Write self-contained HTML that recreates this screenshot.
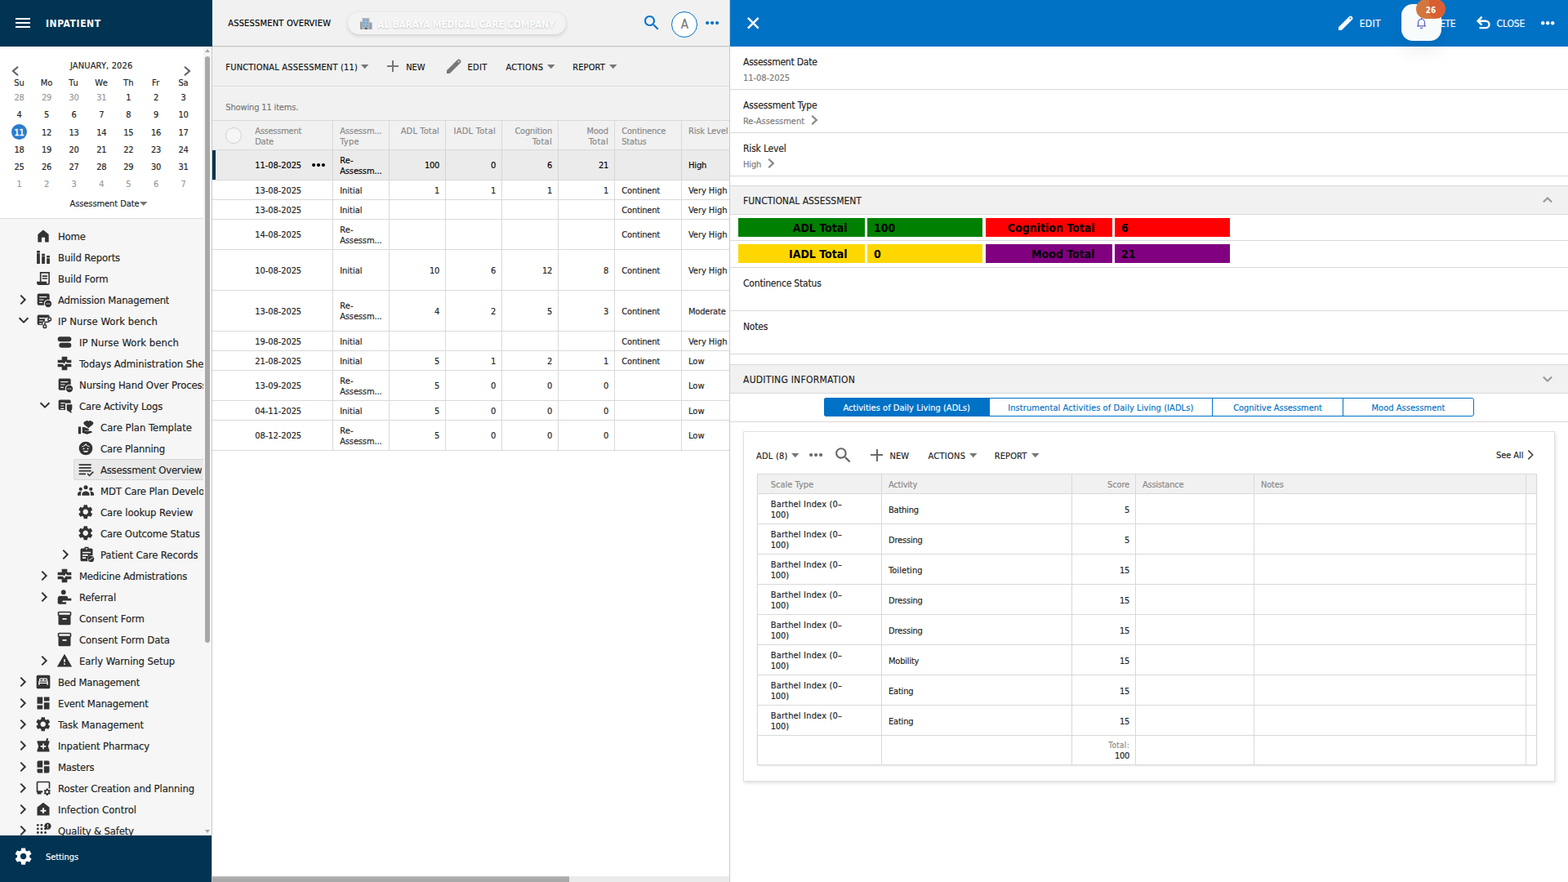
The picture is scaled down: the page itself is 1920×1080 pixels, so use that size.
<!DOCTYPE html>
<html lang="en"><head><meta charset="utf-8"><title>Assessment Overview</title><style>
*{box-sizing:border-box;margin:0;padding:0}
html,body{width:1920px;height:1080px;overflow:hidden;background:#fff}
body{position:relative;font-family:"DejaVu Sans Condensed","DejaVu Sans","Liberation Sans",sans-serif;font-stretch:condensed;font-size:11px;color:#222}
.a{position:absolute;white-space:nowrap;-webkit-text-stroke:0.15px}
svg{display:block;overflow:visible}
</style></head>
<body>
<div class="a" style="left:0px;top:0px;width:260px;height:57px;background:#003452;"></div>
<div class="a" style="left:0px;top:57px;width:249px;height:210px;background:#fff;"></div>
<div class="a" style="left:0px;top:267px;width:249px;height:1px;background:#dcdcdc;"></div>
<div class="a" style="left:0px;top:268px;width:249px;height:755px;background:#f6f6f6;"></div>
<div class="a" style="left:249px;top:57px;width:10px;height:966px;background:#f6f6f6;"></div>
<div class="a" style="left:251px;top:69px;width:6px;height:718px;background:#a8a8a8;border-radius:3px"></div>
<svg class="a" style="left:249px;top:57px" width="10" height="10" viewBox="0 0 10 10"><path d="M2 7L5 3L8 7z" fill="#a6a6a6"/></svg>
<svg class="a" style="left:249px;top:1013px" width="10" height="10" viewBox="0 0 10 10"><path d="M2 3L5 7L8 3z" fill="#a6a6a6"/></svg>
<div class="a" style="left:259px;top:57px;width:1px;height:1023px;background:#c8c8c8;"></div>
<div class="a" style="left:19px;top:22px;width:18px;height:2px;background:#fff;"></div>
<div class="a" style="left:19px;top:27px;width:18px;height:2px;background:#fff;"></div>
<div class="a" style="left:19px;top:32px;width:18px;height:2px;background:#fff;"></div>
<div class="a" style="left:56px;top:22px;line-height:14px;font-size:12px;color:#fff;letter-spacing:0.58px;font-weight:700;-webkit-text-stroke:0">INPATIENT</div>
<div class="a" style="left:24.2px;width:200px;text-align:center;top:74px;line-height:13px;color:#222;letter-spacing:0.15px">JANUARY, 2026</div>
<svg class="a" style="left:9.3px;top:77px" width="20" height="20" viewBox="-10 -10 20 20"><path d="M3 -5.3L-3 0L3 5.3" fill="none" stroke="#5f6670" stroke-width="2.2"/></svg>
<svg class="a" style="left:218.8px;top:77px" width="20" height="20" viewBox="-10 -10 20 20"><path d="M-3 -5.3L3 0L-3 5.3" fill="none" stroke="#5f6670" stroke-width="2.2"/></svg>
<div class="a" style="left:6.4px;width:34px;text-align:center;top:95px;line-height:13px;color:#222;letter-spacing:-0.15px">Su</div>
<div class="a" style="left:39.9px;width:34px;text-align:center;top:95px;line-height:13px;color:#222;letter-spacing:-0.07px">Mo</div>
<div class="a" style="left:73.5px;width:34px;text-align:center;top:95px;line-height:13px;color:#222;letter-spacing:0.96px">Tu</div>
<div class="a" style="left:107.2px;width:34px;text-align:center;top:95px;line-height:13px;color:#222;letter-spacing:0.24px">We</div>
<div class="a" style="left:140.3px;width:34px;text-align:center;top:95px;line-height:13px;color:#222;letter-spacing:0.12px">Th</div>
<div class="a" style="left:173.9px;width:34px;text-align:center;top:95px;line-height:13px;color:#222;letter-spacing:0.37px">Fr</div>
<div class="a" style="left:207.5px;width:34px;text-align:center;top:95px;line-height:13px;color:#222;letter-spacing:-0.22px">Sa</div>
<div class="a" style="left:6.4px;width:34px;text-align:center;top:113px;line-height:13px;color:#999;letter-spacing:-0.29px">28</div>
<div class="a" style="left:39.9px;width:34px;text-align:center;top:113px;line-height:13px;color:#999;letter-spacing:-0.29px">29</div>
<div class="a" style="left:73.5px;width:34px;text-align:center;top:113px;line-height:13px;color:#999;letter-spacing:-0.29px">30</div>
<div class="a" style="left:107.2px;width:34px;text-align:center;top:113px;line-height:13px;color:#999;letter-spacing:-0.29px">31</div>
<div class="a" style="left:140.3px;width:34px;text-align:center;top:113px;line-height:13px;color:#222;letter-spacing:-0.29px">1</div>
<div class="a" style="left:173.9px;width:34px;text-align:center;top:113px;line-height:13px;color:#222;letter-spacing:-0.29px">2</div>
<div class="a" style="left:207.5px;width:34px;text-align:center;top:113px;line-height:13px;color:#222;letter-spacing:-0.29px">3</div>
<div class="a" style="left:6.4px;width:34px;text-align:center;top:134px;line-height:13px;color:#222;letter-spacing:-0.29px">4</div>
<div class="a" style="left:39.9px;width:34px;text-align:center;top:134px;line-height:13px;color:#222;letter-spacing:-0.29px">5</div>
<div class="a" style="left:73.5px;width:34px;text-align:center;top:134px;line-height:13px;color:#222;letter-spacing:-0.29px">6</div>
<div class="a" style="left:107.2px;width:34px;text-align:center;top:134px;line-height:13px;color:#222;letter-spacing:-0.29px">7</div>
<div class="a" style="left:140.3px;width:34px;text-align:center;top:134px;line-height:13px;color:#222;letter-spacing:-0.29px">8</div>
<div class="a" style="left:173.9px;width:34px;text-align:center;top:134px;line-height:13px;color:#222;letter-spacing:-0.29px">9</div>
<div class="a" style="left:207.5px;width:34px;text-align:center;top:134px;line-height:13px;color:#222;letter-spacing:-0.29px">10</div>
<div class="a" style="left:14px;top:152px;width:19px;height:19px;background:#2b7ccd;border-radius:50%"></div>
<div class="a" style="left:6.4px;width:34px;text-align:center;top:156px;line-height:13px;color:#fff;letter-spacing:-0.29px;-webkit-text-stroke:0.5px">11</div>
<div class="a" style="left:39.9px;width:34px;text-align:center;top:156px;line-height:13px;color:#222;letter-spacing:-0.29px">12</div>
<div class="a" style="left:73.5px;width:34px;text-align:center;top:156px;line-height:13px;color:#222;letter-spacing:-0.29px">13</div>
<div class="a" style="left:107.2px;width:34px;text-align:center;top:156px;line-height:13px;color:#222;letter-spacing:-0.29px">14</div>
<div class="a" style="left:140.3px;width:34px;text-align:center;top:156px;line-height:13px;color:#222;letter-spacing:-0.29px">15</div>
<div class="a" style="left:173.9px;width:34px;text-align:center;top:156px;line-height:13px;color:#222;letter-spacing:-0.29px">16</div>
<div class="a" style="left:207.5px;width:34px;text-align:center;top:156px;line-height:13px;color:#222;letter-spacing:-0.29px">17</div>
<div class="a" style="left:6.4px;width:34px;text-align:center;top:177px;line-height:13px;color:#222;letter-spacing:-0.29px">18</div>
<div class="a" style="left:39.9px;width:34px;text-align:center;top:177px;line-height:13px;color:#222;letter-spacing:-0.29px">19</div>
<div class="a" style="left:73.5px;width:34px;text-align:center;top:177px;line-height:13px;color:#222;letter-spacing:-0.29px">20</div>
<div class="a" style="left:107.2px;width:34px;text-align:center;top:177px;line-height:13px;color:#222;letter-spacing:-0.29px">21</div>
<div class="a" style="left:140.3px;width:34px;text-align:center;top:177px;line-height:13px;color:#222;letter-spacing:-0.29px">22</div>
<div class="a" style="left:173.9px;width:34px;text-align:center;top:177px;line-height:13px;color:#222;letter-spacing:-0.29px">23</div>
<div class="a" style="left:207.5px;width:34px;text-align:center;top:177px;line-height:13px;color:#222;letter-spacing:-0.29px">24</div>
<div class="a" style="left:6.4px;width:34px;text-align:center;top:198px;line-height:13px;color:#222;letter-spacing:-0.29px">25</div>
<div class="a" style="left:39.9px;width:34px;text-align:center;top:198px;line-height:13px;color:#222;letter-spacing:-0.29px">26</div>
<div class="a" style="left:73.5px;width:34px;text-align:center;top:198px;line-height:13px;color:#222;letter-spacing:-0.29px">27</div>
<div class="a" style="left:107.2px;width:34px;text-align:center;top:198px;line-height:13px;color:#222;letter-spacing:-0.29px">28</div>
<div class="a" style="left:140.3px;width:34px;text-align:center;top:198px;line-height:13px;color:#222;letter-spacing:-0.29px">29</div>
<div class="a" style="left:173.9px;width:34px;text-align:center;top:198px;line-height:13px;color:#222;letter-spacing:-0.29px">30</div>
<div class="a" style="left:207.5px;width:34px;text-align:center;top:198px;line-height:13px;color:#222;letter-spacing:-0.29px">31</div>
<div class="a" style="left:6.4px;width:34px;text-align:center;top:219px;line-height:13px;color:#999;letter-spacing:-0.29px">1</div>
<div class="a" style="left:39.9px;width:34px;text-align:center;top:219px;line-height:13px;color:#999;letter-spacing:-0.29px">2</div>
<div class="a" style="left:73.5px;width:34px;text-align:center;top:219px;line-height:13px;color:#999;letter-spacing:-0.29px">3</div>
<div class="a" style="left:107.2px;width:34px;text-align:center;top:219px;line-height:13px;color:#999;letter-spacing:-0.29px">4</div>
<div class="a" style="left:140.3px;width:34px;text-align:center;top:219px;line-height:13px;color:#999;letter-spacing:-0.29px">5</div>
<div class="a" style="left:173.9px;width:34px;text-align:center;top:219px;line-height:13px;color:#999;letter-spacing:-0.29px">6</div>
<div class="a" style="left:207.5px;width:34px;text-align:center;top:219px;line-height:13px;color:#999;letter-spacing:-0.29px">7</div>
<div class="a" style="left:85.5px;top:243px;line-height:13px;color:#222;letter-spacing:-0.08px">Assessment Date</div>
<svg class="a" style="left:171.300px;top:247px" width="9.500" height="5" viewBox="0 0 9.500 5"><path d="M0 0h9.500L4.750 5z" fill="#777"/></svg>
<svg class="a" style="left:43px;top:279px;" width="20" height="20" viewBox="0 0 24 24"><path d="M4 21V9.5L12 3l8 6.5V21h-5.5v-7h-5v7z" fill="#333" /></svg>
<div class="a" style="left:71px;top:281px;line-height:18px;font-size:13px;color:#222;letter-spacing:-0.24px;max-width:178px;overflow:hidden">Home</div>
<svg class="a" style="left:43px;top:305px;" width="20" height="20" viewBox="0 0 24 24"><path fill="#333" d="M2.500 2.500h4.500v3.200H2.500zM2.500 6.400h4.500V21.500H2.500zM9.800 7h4.500v3.200H9.800zM9.800 10.900h4.500V21.500H9.800zM17 9.500h4.500v3.200H17zM17 13.400h4.500V21.500H17z"/></svg>
<div class="a" style="left:71px;top:307px;line-height:18px;font-size:13px;color:#222;letter-spacing:-0.14px;max-width:178px;overflow:hidden">Build Reports</div>
<svg class="a" style="left:43px;top:331px;" width="20" height="20" viewBox="0 0 24 24"><path fill="#333" fill-rule="evenodd" d="M7 2.500h14.500v16a3 3 0 0 1-3 3H5.500a3 3 0 0 1-3-3V16.500h4.500zM9 4.500v12h8V18.500a1.250 1.250 0 0 0 2.500 0V4.500zM10.500 7.500h7.500v2h-7.500zM10.500 11h7.500v2h-7.500z"/></svg>
<div class="a" style="left:71px;top:333px;line-height:18px;font-size:13px;color:#222;letter-spacing:-0.09px;max-width:178px;overflow:hidden">Build Form</div>
<svg class="a" style="left:18.2px;top:357px" width="20" height="20" viewBox="-10 -10 20 20"><path d="M-2.7 -5.4L2.7 0L-2.7 5.4" fill="none" stroke="#333" stroke-width="2"/></svg>
<svg class="a" style="left:43.8px;top:357px;" width="20" height="20" viewBox="0 0 24 24"><path fill="#333" fill-rule="evenodd" d="M4 3h14a2 2 0 0 1 2 2v7.200a6 6 0 0 0-7.800 7.800H4a2 2 0 0 1-2-2V5a2 2 0 0 1 2-2zM5 7.300v1.400h11V7.300zM5 11.300v1.400h6.500v-1.400zM5 15.300v1.400h4.500v-1.400z"/><circle cx="18" cy="18" r="5" fill="#333"/><circle cx="15.800" cy="18" r=".9" fill="#ccc"/><circle cx="18" cy="18" r=".9" fill="#ccc"/><circle cx="20.200" cy="18" r=".9" fill="#ccc"/></svg>
<div class="a" style="left:71px;top:359px;line-height:18px;font-size:13px;color:#222;letter-spacing:-0.22px;max-width:178px;overflow:hidden">Admission Management</div>
<svg class="a" style="left:19.1px;top:381.9px" width="20" height="20" viewBox="-10 -10 20 20"><path d="M-5.4 -2.7L0 2.7L5.4 -2.7" fill="none" stroke="#333" stroke-width="2"/></svg>
<svg class="a" style="left:43.8px;top:383px;" width="20" height="20" viewBox="0 0 24 24"><path fill="#333" fill-rule="evenodd" d="M4 3h14a2 2 0 0 1 2 2v2h-3a4 4 0 0 0-4 4v2a3 3 0 0 0-3 3v2H4a2 2 0 0 1-2-2V5a2 2 0 0 1 2-2zM5 7.300v1.400h8.500V7.300zM5 11.300v1.400h5.500v-1.400zM5 15.300v1.400h3.500v-1.400z"/><circle cx="20" cy="9.500" r="2.200" fill="none" stroke="#333" stroke-width="1.800"/><circle cx="13" cy="20" r="2.200" fill="none" stroke="#333" stroke-width="1.800"/><path d="M13 18v-2.500a2 2 0 0 1 2-2h3a2 2 0 0 0 2-2" fill="none" stroke="#333" stroke-width="1.800"/></svg>
<div class="a" style="left:71px;top:385px;line-height:18px;font-size:13px;color:#222;letter-spacing:0.03px;max-width:178px;overflow:hidden">IP Nurse Work bench</div>
<svg class="a" style="left:69px;top:409px;" width="20" height="20" viewBox="0 0 24 24"><rect x="2" y="4" width="20" height="7" rx="3.500" fill="#333"/><rect x="4" y="13" width="18" height="7" rx="3.500" fill="#333"/></svg>
<div class="a" style="left:97px;top:411px;line-height:18px;font-size:13px;color:#222;letter-spacing:0.03px;max-width:152px;overflow:hidden">IP Nurse Work bench</div>
<svg class="a" style="left:69px;top:435px;" width="20" height="20" viewBox="0 0 24 24"><path fill="#333" fill-rule="evenodd" d="M8 2h8v5h6v4.200h-6.500l-1.500-2.500-2.500 4-1.300-1.500H2V7h6zM2 13h7.400l2.400 2.800 2.400-3.800 0.700 1h7.100v4h-6v5H8v-5H2z"/></svg>
<div class="a" style="left:97px;top:437px;line-height:18px;font-size:13px;color:#222;letter-spacing:-0.09px;max-width:152px;overflow:hidden">Todays Administration Sheet</div>
<svg class="a" style="left:69.8px;top:461px;" width="20" height="20" viewBox="0 0 24 24"><path fill="#333" fill-rule="evenodd" d="M4 3h14a2 2 0 0 1 2 2v7.200a6 6 0 0 0-7.800 7.800H4a2 2 0 0 1-2-2V5a2 2 0 0 1 2-2zM5 7.300v1.400h11V7.300zM5 11.300v1.400h6.500v-1.400zM5 15.300v1.400h4.500v-1.400z"/><circle cx="18" cy="18" r="5" fill="#333"/><circle cx="15.800" cy="18" r=".9" fill="#ccc"/><circle cx="18" cy="18" r=".9" fill="#ccc"/><circle cx="20.200" cy="18" r=".9" fill="#ccc"/></svg>
<div class="a" style="left:97px;top:463px;line-height:18px;font-size:13px;color:#222;letter-spacing:-0.12px;max-width:152px;overflow:hidden">Nursing Hand Over Process</div>
<svg class="a" style="left:45.2px;top:485.9px" width="20" height="20" viewBox="-10 -10 20 20"><path d="M-5.4 -2.7L0 2.7L5.4 -2.7" fill="none" stroke="#333" stroke-width="2"/></svg>
<svg class="a" style="left:69.8px;top:487px;" width="20" height="20" viewBox="0 0 24 24"><path fill="#333" fill-rule="evenodd" d="M4 3h14a2 2 0 0 1 2 2v3h-8v10H4a2 2 0 0 1-2-2V5a2 2 0 0 1 2-2zM5 7.300v1.400h6.500V7.300zM5 11.300v1.400h5v-1.400zM5 15.300v1.400h5v-1.400z"/><path fill="#333" d="M14 10h8v6a4 4 0 0 1-2 3.400l2 2.600h-3l-1.200-1.700A4 4 0 0 1 14 16z"/></svg>
<div class="a" style="left:97px;top:489px;line-height:18px;font-size:13px;color:#222;letter-spacing:-0.16px;max-width:152px;overflow:hidden">Care Activity Logs</div>
<svg class="a" style="left:95px;top:513px;" width="20" height="20" viewBox="0 0 24 24"><path fill="#333" d="M1 11.500h4V22H1zM16 3.500a2.700 2.700 0 0 1 4.500 0a2.700 2.700 0 0 1 2 4.500L16 13.500 9.500 8a2.700 2.700 0 0 1 2-4.500a2.700 2.700 0 0 1 4.500 0zM7 12h3l6 2.300a1.500 1.500 0 0 1-.5 2.700h-3l-2-.700 0 .700 2 .700h7a2 2 0 0 1 2 2L14 22.500 7 20.500z"/></svg>
<div class="a" style="left:123px;top:515px;line-height:18px;font-size:13px;color:#222;letter-spacing:-0.03px;max-width:126px;overflow:hidden">Care Plan Template</div>
<svg class="a" style="left:95px;top:539px;" width="20" height="20" viewBox="0 0 24 24"><circle cx="12" cy="12" r="10" fill="#333"/><path d="M6.500 9.500c2.500-.3 4.500-1.500 5.500-3.500c1 2 3 3.200 5.500 3.500" fill="none" stroke="#eee" stroke-width="1.300"/><circle cx="9" cy="12.500" r="1.200" fill="#eee"/><circle cx="15" cy="12.500" r="1.200" fill="#eee"/><path d="M8 15.500a4.500 4.500 0 0 0 8 0z" fill="#eee"/></svg>
<div class="a" style="left:123px;top:541px;line-height:18px;font-size:13px;color:#222;letter-spacing:-0.16px;max-width:126px;overflow:hidden">Care Planning</div>
<div class="a" style="left:90px;top:562px;width:159px;height:26px;background:#e9e9e9;border:1px solid #d6d6d6;border-right:0;border-radius:3px 0 0 3px"></div>
<svg class="a" style="left:95px;top:565px;" width="20" height="20" viewBox="0 0 24 24"><path fill="#333" d="M2 4h18v2H2zM2 8.500h18v2H2zM2 13h18v2H2zM2 17.500h10v2H2zM22.500 14.500l1.400 1.400-6.400 6.400-3.700-3.700 1.400-1.400 2.300 2.300z"/></svg>
<div class="a" style="left:123px;top:567px;line-height:18px;font-size:13px;color:#222;letter-spacing:-0.24px;max-width:126px;overflow:hidden">Assessment Overview</div>
<svg class="a" style="left:95px;top:591px;" width="20" height="20" viewBox="0 0 24 24"><circle cx="12" cy="7" r="3" fill="#333"/><circle cx="4.500" cy="9.500" r="2.500" fill="#333"/><circle cx="19.500" cy="9.500" r="2.500" fill="#333"/><path fill="#333" d="M6.500 19v-2.500c0-2.500 3-4 5.500-4s5.500 1.500 5.500 4V19zM0 19v-2.500c0-2 2-3.300 4.500-3.500c.5 0 1 .1 1.300.3C5 14.200 4.800 15.500 4.800 16.500V19zM24 19v-2.500c0-2-2-3.300-4.500-3.500c-.5 0-1 .1-1.300.3c.8.900 1 2.200 1 3.200V19z"/></svg>
<div class="a" style="left:123px;top:593px;line-height:18px;font-size:13px;color:#222;letter-spacing:-0.14px;max-width:126px;overflow:hidden">MDT Care Plan Development</div>
<svg class="a" style="left:94.25px;top:616.25px;" width="21.5" height="21.5" viewBox="0 0 24 24"><path d="M19.14 12.94c.04-.3.06-.61.06-.94 0-.32-.02-.64-.07-.94l2.03-1.58c.18-.14.23-.41.12-.61l-1.92-3.32c-.12-.22-.37-.29-.59-.22l-2.39.96c-.5-.38-1.03-.7-1.62-.94l-.36-2.54c-.04-.24-.24-.41-.48-.41h-3.84c-.24 0-.43.17-.47.41l-.36 2.54c-.59.24-1.13.57-1.62.94l-2.39-.96c-.22-.08-.47 0-.59.22L2.74 8.87c-.12.21-.08.47.12.61l2.03 1.58c-.05.3-.09.63-.09.94s.02.64.07.94l-2.03 1.58c-.18.14-.23.41-.12.61l1.92 3.32c.12.22.37.29.59.22l2.39-.96c.5.38 1.03.7 1.62.94l.36 2.54c.05.24.24.41.48.41h3.84c.24 0 .44-.17.47-.41l.36-2.54c.59-.24 1.13-.56 1.62-.94l2.39.96c.22.08.47 0 .59-.22l1.92-3.32c.12-.22.07-.47-.12-.61l-2.01-1.58zM12 15.6c-1.98 0-3.6-1.62-3.6-3.6s1.62-3.6 3.6-3.6 3.6 1.62 3.6 3.6-1.62 3.6-3.6 3.6z" fill="#333" /></svg>
<div class="a" style="left:123px;top:619px;line-height:18px;font-size:13px;color:#222;letter-spacing:-0.1px;max-width:126px;overflow:hidden">Care lookup Review</div>
<svg class="a" style="left:94.25px;top:642.25px;" width="21.5" height="21.5" viewBox="0 0 24 24"><path d="M19.14 12.94c.04-.3.06-.61.06-.94 0-.32-.02-.64-.07-.94l2.03-1.58c.18-.14.23-.41.12-.61l-1.92-3.32c-.12-.22-.37-.29-.59-.22l-2.39.96c-.5-.38-1.03-.7-1.62-.94l-.36-2.54c-.04-.24-.24-.41-.48-.41h-3.84c-.24 0-.43.17-.47.41l-.36 2.54c-.59.24-1.13.57-1.62.94l-2.39-.96c-.22-.08-.47 0-.59.22L2.74 8.87c-.12.21-.08.47.12.61l2.03 1.58c-.05.3-.09.63-.09.94s.02.64.07.94l-2.03 1.58c-.18.14-.23.41-.12.61l1.92 3.32c.12.22.37.29.59.22l2.39-.96c.5.38 1.03.7 1.62.94l.36 2.54c.05.24.24.41.48.41h3.84c.24 0 .44-.17.47-.41l.36-2.54c.59-.24 1.13-.56 1.62-.94l2.39.96c.22.08.47 0 .59-.22l1.92-3.32c.12-.22.07-.47-.12-.61l-2.01-1.58zM12 15.6c-1.98 0-3.6-1.62-3.6-3.6s1.62-3.6 3.6-3.6 3.6 1.62 3.6 3.6-1.62 3.6-3.6 3.6z" fill="#333" /></svg>
<div class="a" style="left:123px;top:645px;line-height:18px;font-size:13px;color:#222;letter-spacing:-0.18px;max-width:126px;overflow:hidden">Care Outcome Status</div>
<svg class="a" style="left:70.4px;top:669px" width="20" height="20" viewBox="-10 -10 20 20"><path d="M-2.7 -5.4L2.7 0L-2.7 5.4" fill="none" stroke="#333" stroke-width="2"/></svg>
<svg class="a" style="left:95.8px;top:669px;" width="20" height="20" viewBox="0 0 24 24"><path fill="#333" fill-rule="evenodd" d="M9 1h6v2h4a2 2 0 0 1 2 2v8.500a6 6 0 0 0-7 8.500H5a2 2 0 0 1-2-2V5a2 2 0 0 1 2-2h4zM11 2.800v1.700h2V2.800zM6 8v2h12V8zM6 12v2h8v-2zM6 16v2h5v-2z"/><circle cx="18.500" cy="18.500" r="4.500" fill="#333"/><path d="M15.500 20.500l6-4" stroke="#eee" stroke-width="1.200"/></svg>
<div class="a" style="left:123px;top:671px;line-height:18px;font-size:13px;color:#222;letter-spacing:-0.1px;max-width:126px;overflow:hidden">Patient Care Records</div>
<svg class="a" style="left:44.3px;top:695px" width="20" height="20" viewBox="-10 -10 20 20"><path d="M-2.7 -5.4L2.7 0L-2.7 5.4" fill="none" stroke="#333" stroke-width="2"/></svg>
<svg class="a" style="left:69px;top:695px;" width="20" height="20" viewBox="0 0 24 24"><path fill="#333" fill-rule="evenodd" d="M8 2h8v5h6v4.200h-6.500l-1.500-2.500-2.500 4-1.300-1.500H2V7h6zM2 13h7.400l2.400 2.800 2.400-3.800 0.700 1h7.100v4h-6v5H8v-5H2z"/></svg>
<div class="a" style="left:97px;top:697px;line-height:18px;font-size:13px;color:#222;letter-spacing:-0.22px;max-width:152px;overflow:hidden">Medicine Admistrations</div>
<svg class="a" style="left:44.3px;top:721px" width="20" height="20" viewBox="-10 -10 20 20"><path d="M-2.7 -5.4L2.7 0L-2.7 5.4" fill="none" stroke="#333" stroke-width="2"/></svg>
<svg class="a" style="left:69px;top:721px;" width="20" height="20" viewBox="0 0 24 24"><circle cx="10.500" cy="5" r="3.400" fill="#333"/><path fill="#333" d="M4 10.500h10a3 3 0 0 1 3 3v.500h5v3.500H9.500l-1 2h6v3H4a2 2 0 0 1-2-2v-6a4 4 0 0 1 2-4z"/></svg>
<div class="a" style="left:97px;top:723px;line-height:18px;font-size:13px;color:#222;letter-spacing:-0.1px;max-width:152px;overflow:hidden">Referral</div>
<svg class="a" style="left:69px;top:747px;" width="20" height="20" viewBox="0 0 24 24"><path d="M20 2H4c-1 0-2 .9-2 2v3.01c0 .72.43 1.34 1 1.69V20c0 1.1 1.1 2 2 2h14c.9 0 2-.9 2-2V8.7c.57-.35 1-.97 1-1.69V4c0-1.1-1-2-2-2zm-5 12H9v-2h6v2zm5-7H4V4h16v3z" fill="#333" /></svg>
<div class="a" style="left:97px;top:749px;line-height:18px;font-size:13px;color:#222;letter-spacing:-0.11px;max-width:152px;overflow:hidden">Consent Form</div>
<svg class="a" style="left:69px;top:773px;" width="20" height="20" viewBox="0 0 24 24"><path d="M20 2H4c-1 0-2 .9-2 2v3.01c0 .72.43 1.34 1 1.69V20c0 1.1 1.1 2 2 2h14c.9 0 2-.9 2-2V8.7c.57-.35 1-.97 1-1.69V4c0-1.1-1-2-2-2zm-5 12H9v-2h6v2zm5-7H4V4h16v3z" fill="#333" /></svg>
<div class="a" style="left:97px;top:775px;line-height:18px;font-size:13px;color:#222;letter-spacing:-0.12px;max-width:152px;overflow:hidden">Consent Form Data</div>
<svg class="a" style="left:44.3px;top:799px" width="20" height="20" viewBox="-10 -10 20 20"><path d="M-2.7 -5.4L2.7 0L-2.7 5.4" fill="none" stroke="#333" stroke-width="2"/></svg>
<svg class="a" style="left:69px;top:799px;" width="20" height="20" viewBox="0 0 24 24"><path d="M1 21h22L12 2 1 21zm12-3h-2v-2h2v2zm0-4h-2v-4h2v4z" fill="#333" /></svg>
<div class="a" style="left:97px;top:801px;line-height:18px;font-size:13px;color:#222;letter-spacing:-0.1px;max-width:152px;overflow:hidden">Early Warning Setup</div>
<svg class="a" style="left:18.2px;top:825px" width="20" height="20" viewBox="-10 -10 20 20"><path d="M-2.7 -5.4L2.7 0L-2.7 5.4" fill="none" stroke="#333" stroke-width="2"/></svg>
<svg class="a" style="left:43px;top:825px;" width="20" height="20" viewBox="0 0 24 24"><path fill="#333" fill-rule="evenodd" d="M4 2h16a2 2 0 0 1 2 2v16a2 2 0 0 1-2 2H4a2 2 0 0 1-2-2V4a2 2 0 0 1 2-2zM5 16.500h1.700v-2h10.600v2H19V11.500a1.500 1.500 0 0 0-1-1.400V8a1.500 1.500 0 0 0-1.500-1.500h-9A1.500 1.500 0 0 0 6 8v2.100a1.500 1.500 0 0 0-1 1.400zM7.500 8h3.700v2H7.500zM12.800 8h3.700v2h-3.700zM6.700 11.500h10.600v1.500H6.700z"/></svg>
<div class="a" style="left:71px;top:827px;line-height:18px;font-size:13px;color:#222;letter-spacing:-0.24px;max-width:178px;overflow:hidden">Bed Management</div>
<svg class="a" style="left:18.2px;top:851px" width="20" height="20" viewBox="-10 -10 20 20"><path d="M-2.7 -5.4L2.7 0L-2.7 5.4" fill="none" stroke="#333" stroke-width="2"/></svg>
<svg class="a" style="left:43px;top:851px;" width="20" height="20" viewBox="0 0 24 24"><path fill="#333" d="M3 3h8v10H3zM3 15h8v6H3zM13 11h8v10h-8zM13 3h8v6h-8z"/></svg>
<div class="a" style="left:71px;top:853px;line-height:18px;font-size:13px;color:#222;letter-spacing:-0.23px;max-width:178px;overflow:hidden">Event Management</div>
<svg class="a" style="left:18.2px;top:877px" width="20" height="20" viewBox="-10 -10 20 20"><path d="M-2.7 -5.4L2.7 0L-2.7 5.4" fill="none" stroke="#333" stroke-width="2"/></svg>
<svg class="a" style="left:42.25px;top:876.25px;" width="21.5" height="21.5" viewBox="0 0 24 24"><path d="M19.14 12.94c.04-.3.06-.61.06-.94 0-.32-.02-.64-.07-.94l2.03-1.58c.18-.14.23-.41.12-.61l-1.92-3.32c-.12-.22-.37-.29-.59-.22l-2.39.96c-.5-.38-1.03-.7-1.62-.94l-.36-2.54c-.04-.24-.24-.41-.48-.41h-3.84c-.24 0-.43.17-.47.41l-.36 2.54c-.59.24-1.13.57-1.62.94l-2.39-.96c-.22-.08-.47 0-.59.22L2.74 8.87c-.12.21-.08.47.12.61l2.03 1.58c-.05.3-.09.63-.09.94s.02.64.07.94l-2.03 1.58c-.18.14-.23.41-.12.61l1.92 3.32c.12.22.37.29.59.22l2.39-.96c.5.38 1.03.7 1.62.94l.36 2.54c.05.24.24.41.48.41h3.84c.24 0 .44-.17.47-.41l.36-2.54c.59-.24 1.13-.56 1.62-.94l2.39.96c.22.08.47 0 .59-.22l1.92-3.32c.12-.22.07-.47-.12-.61l-2.01-1.58zM12 15.6c-1.98 0-3.6-1.62-3.6-3.6s1.62-3.6 3.6-3.6 3.6 1.62 3.6 3.6-1.62 3.6-3.6 3.6z" fill="#333" /></svg>
<div class="a" style="left:71px;top:879px;line-height:18px;font-size:13px;color:#222;letter-spacing:-0.05px;max-width:178px;overflow:hidden">Task Management</div>
<svg class="a" style="left:18.2px;top:903px" width="20" height="20" viewBox="-10 -10 20 20"><path d="M-2.7 -5.4L2.7 0L-2.7 5.4" fill="none" stroke="#333" stroke-width="2"/></svg>
<svg class="a" style="left:43px;top:903px;" width="20" height="20" viewBox="0 0 24 24"><path fill="#333" fill-rule="evenodd" d="M21 5h-2.640l1.140-3.140L17.150 1l-1.460 4H3v2l2 6-2 6v2h18v-2l-2-6 2-6V5zm-5 9h-3v3h-2v-3H8v-2h3V9h2v3h3v2z"/></svg>
<div class="a" style="left:71px;top:905px;line-height:18px;font-size:13px;color:#222;letter-spacing:-0.12px;max-width:178px;overflow:hidden">Inpatient Pharmacy</div>
<svg class="a" style="left:18.2px;top:929px" width="20" height="20" viewBox="-10 -10 20 20"><path d="M-2.7 -5.4L2.7 0L-2.7 5.4" fill="none" stroke="#333" stroke-width="2"/></svg>
<svg class="a" style="left:43px;top:929px;" width="20" height="20" viewBox="0 0 24 24"><path fill="#333" d="M5 3h6v10H3V5a2 2 0 0 1 2-2zM3 15h8v6H5a2 2 0 0 1-2-2zM13 11h8v8a2 2 0 0 1-2 2h-6zM13 3h6a2 2 0 0 1 2 2v4h-8z"/></svg>
<div class="a" style="left:71px;top:931px;line-height:18px;font-size:13px;color:#222;letter-spacing:-0.25px;max-width:178px;overflow:hidden">Masters</div>
<svg class="a" style="left:18.2px;top:955px" width="20" height="20" viewBox="-10 -10 20 20"><path d="M-2.7 -5.4L2.7 0L-2.7 5.4" fill="none" stroke="#333" stroke-width="2"/></svg>
<svg class="a" style="left:43px;top:955px;" width="20" height="20" viewBox="0 0 24 24"><path fill="#333" fill-rule="evenodd" d="M4 2h16a2 2 0 0 1 2 2v8.500h-2V4H4v12h7v2.500H9V21H3v-2.500h0A2 2 0 0 1 2 16V4a2 2 0 0 1 2-2z"/><g transform="translate(11.500 11.500) scale(.52)"><path fill="#333" d="M19.14 12.94c.04-.3.06-.61.06-.94 0-.32-.02-.64-.07-.94l2.03-1.58c.18-.14.23-.41.12-.61l-1.92-3.32c-.12-.22-.37-.29-.59-.22l-2.39.96c-.5-.38-1.03-.7-1.62-.94l-.36-2.54c-.04-.24-.24-.41-.48-.41h-3.84c-.24 0-.43.17-.47.41l-.36 2.54c-.59.24-1.13.57-1.62.94l-2.39-.96c-.22-.08-.47 0-.59.22L2.74 8.87c-.12.21-.08.47.12.61l2.03 1.58c-.05.3-.09.63-.09.94s.02.64.07.94l-2.03 1.58c-.18.14-.23.41-.12.61l1.92 3.32c.12.22.37.29.59.22l2.39-.96c.5.38 1.03.7 1.62.94l.36 2.54c.05.24.24.41.48.41h3.84c.24 0 .44-.17.47-.41l.36-2.54c.59-.24 1.13-.56 1.62-.94l2.39.96c.22.08.47 0 .59-.22l1.92-3.32c.12-.22.07-.47-.12-.61l-2.01-1.58zM12 15.6c-1.98 0-3.6-1.62-3.6-3.6s1.62-3.6 3.6-3.6 3.6 1.62 3.6 3.6-1.62 3.6-3.6 3.6z"/></g></svg>
<div class="a" style="left:71px;top:957px;line-height:18px;font-size:13px;color:#222;letter-spacing:-0.12px;max-width:178px;overflow:hidden">Roster Creation and Planning</div>
<svg class="a" style="left:18.2px;top:981px" width="20" height="20" viewBox="-10 -10 20 20"><path d="M-2.7 -5.4L2.7 0L-2.7 5.4" fill="none" stroke="#333" stroke-width="2"/></svg>
<svg class="a" style="left:43px;top:981px;" width="20" height="20" viewBox="0 0 24 24"><path fill="#333" fill-rule="evenodd" d="M12 2l9 7v12H3V9zM10.800 10v2.800H8v2.400h2.800V18h2.400v-2.800H16v-2.400h-2.800V10z"/></svg>
<div class="a" style="left:71px;top:983px;line-height:18px;font-size:13px;color:#222;letter-spacing:-0.06px;max-width:178px;overflow:hidden">Infection Control</div>
<svg class="a" style="left:18.2px;top:1007px" width="20" height="20" viewBox="-10 -10 20 20"><path d="M-2.7 -5.4L2.7 0L-2.7 5.4" fill="none" stroke="#333" stroke-width="2"/></svg>
<svg class="a" style="left:43px;top:1007px;" width="20" height="20" viewBox="0 0 24 24"><circle cx="4" cy="9.5" r="1.700" fill="#333"/><circle cx="4" cy="15" r="1.700" fill="#333"/><circle cx="4" cy="20.5" r="1.700" fill="#333"/><circle cx="9.5" cy="9.5" r="1.700" fill="#333"/><circle cx="9.5" cy="15" r="1.700" fill="#333"/><circle cx="9.5" cy="20.5" r="1.700" fill="#333"/><circle cx="15" cy="9.5" r="1.700" fill="#333"/><circle cx="15" cy="15" r="1.700" fill="#333"/><circle cx="15" cy="20.5" r="1.700" fill="#333"/><circle cx="4" cy="4" r="1.700" fill="#333"/><circle cx="9.500" cy="4" r="1.700" fill="#333"/><circle cx="18.500" cy="5.500" r="5" fill="#333"/><rect x="17.900" y="2.500" width="1.200" height="3.800" fill="#eee"/><rect x="17.900" y="7.200" width="1.200" height="1.200" fill="#eee"/></svg>
<div class="a" style="left:71px;top:1009px;line-height:18px;font-size:13px;color:#222;letter-spacing:-0.18px;max-width:178px;overflow:hidden">Quality &amp; Safety</div>
<div class="a" style="left:0px;top:1023px;width:259px;height:57px;background:#003452;"></div>
<svg class="a" style="left:15.6px;top:1036.4px;" width="25.2" height="25.2" viewBox="0 0 24 24"><path d="M19.14 12.94c.04-.3.06-.61.06-.94 0-.32-.02-.64-.07-.94l2.03-1.58c.18-.14.23-.41.12-.61l-1.92-3.32c-.12-.22-.37-.29-.59-.22l-2.39.96c-.5-.38-1.03-.7-1.62-.94l-.36-2.54c-.04-.24-.24-.41-.48-.41h-3.84c-.24 0-.43.17-.47.41l-.36 2.54c-.59.24-1.13.57-1.62.94l-2.39-.96c-.22-.08-.47 0-.59.22L2.74 8.87c-.12.21-.08.47.12.61l2.03 1.58c-.05.3-.09.63-.09.94s.02.64.07.94l-2.03 1.58c-.18.14-.23.41-.12.61l1.92 3.32c.12.22.37.29.59.22l2.39-.96c.5.38 1.03.7 1.62.94l.36 2.54c.05.24.24.41.48.41h3.84c.24 0 .44-.17.47-.41l.36-2.54c.59-.24 1.13-.56 1.62-.94l2.39.96c.22.08.47 0 .59-.22l1.92-3.32c.12-.22.07-.47-.12-.61l-2.01-1.58zM12 15.6c-1.98 0-3.6-1.62-3.6-3.6s1.62-3.6 3.6-3.6 3.6 1.62 3.6 3.6-1.62 3.6-3.6 3.6z" fill="#fff" /></svg>
<div class="a" style="left:56px;top:1043px;line-height:13px;color:#fff;letter-spacing:-0.07px">Settings</div>
<div class="a" style="left:260px;top:0;width:634px;height:1080px;overflow:hidden">
<div class="a" style="left:-260px;top:0;width:1920px;height:1080px">
<div class="a" style="left:260px;top:0px;width:634px;height:184px;background:#f1f1f1;"></div>
<div class="a" style="left:260px;top:56px;width:633px;height:1px;background:#c6c6c6;"></div>
<div class="a" style="left:260px;top:57px;width:633px;height:1px;background:#e6e6e6;"></div>
<div class="a" style="left:260px;top:105px;width:633px;height:1px;background:#dcdcdc;"></div>
<div class="a" style="left:893px;top:0px;width:1px;height:1080px;background:#cbc8c8;"></div>
<div class="a" style="left:279.2px;top:22px;line-height:13px;color:#000;letter-spacing:0.2px">ASSESSMENT OVERVIEW</div>
<div class="a" style="left:426px;top:15px;width:267px;height:27px;background:#f3f3f3;border-radius:14px;box-shadow:0 2px 5px rgba(0,0,0,.13),0 0 2px rgba(0,0,0,.05)"></div>
<svg class="a" style="left:441px;top:22px" width="14.500" height="14" viewBox="0 0 14.500 14"><rect x="0" y="4.500" width="4" height="9.500" fill="#9c9c9c"/><rect x="10.500" y="5.500" width="4" height="8.500" fill="#9c9c9c"/><rect x="2.500" y="0" width="9" height="14" fill="#b5b5b5"/><g fill="#5aa9ee"><rect x="3.800" y="1.500" width="2" height="2.200"/><rect x="7.600" y="1.500" width="2" height="2.200"/><rect x="3.800" y="5" width="2" height="2.200"/><rect x="7.600" y="5" width="2" height="2.200"/><rect x="3.800" y="8.500" width="2" height="2.200"/><rect x="7.600" y="8.500" width="2" height="2.200"/><rect x="0.800" y="6" width="1.200" height="1.800"/><rect x="0.800" y="9.500" width="1.200" height="1.800"/><rect x="12.200" y="7" width="1.200" height="1.800"/><rect x="12.200" y="10.200" width="1.200" height="1.800"/></g><rect x="6" y="11.800" width="2.500" height="2.200" fill="#555"/></svg>
<div class="a" style="left:462px;top:22px;line-height:16px;font-size:12px;color:#fff;letter-spacing:-0.2px;font-weight:700;-webkit-text-stroke:0;text-shadow:0 1px 2px rgba(0,0,0,.17),0 0 1px rgba(0,0,0,.1)">AL BARAYA MEDICAL CARE COMPANY</div>
<svg class="a" style="left:786px;top:16px;" width="24" height="24" viewBox="0 0 24 24"><path d="M15.5 14h-.79l-.28-.27C15.41 12.59 16 11.11 16 9.5 16 5.91 13.09 3 9.5 3S3 5.91 3 9.5 5.91 16 9.5 16c1.61 0 3.09-.59 4.23-1.57l.27.28v.79l5 4.99L20.49 19l-4.99-5zm-6 0C7.01 14 5 11.99 5 9.5S7.01 5 9.5 5 14 7.01 14 9.5 11.99 14 9.5 14z" fill="#0072c6" /></svg>
<div class="a" style="left:822px;top:14px;width:32px;height:32px;background:#fff;border-radius:50%;border:1px solid #0072c6"></div>
<div class="a" style="left:822.3px;width:32px;text-align:center;top:20px;line-height:20px;font-size:15px;color:#777">A</div>
<svg class="a" style="left:863.2px;top:24.9px" width="18.2" height="6.2" viewBox="0 0 18.2 6.2"><circle cx="3.1" cy="3.1" r="2.1" fill="#0072c6"/><circle cx="9.1" cy="3.1" r="2.1" fill="#0072c6"/><circle cx="15.1" cy="3.1" r="2.1" fill="#0072c6"/></svg>
<div class="a" style="left:276.3px;top:76px;line-height:13px;color:#111;letter-spacing:0.2px">FUNCTIONAL ASSESSMENT (11)</div>
<svg class="a" style="left:441.7px;top:79px" width="9.3" height="5.3" viewBox="0 0 9.3 5.3"><path d="M0 0h9.3L4.65 5.3z" fill="#777"/></svg>
<div class="a" style="left:474px;top:80.1px;width:14px;height:1.8px;background:#777;"></div><div class="a" style="left:480.1px;top:74px;width:1.8px;height:14px;background:#777;"></div>
<div class="a" style="left:497.2px;top:76px;line-height:13px;color:#111;letter-spacing:-0.05px">NEW</div>
<svg class="a" style="left:544px;top:69px;" width="24" height="24" viewBox="0 0 24 24"><path d="M3 17.250V21h3.750L19.600 8.150a2.650 2.650 0 0 0-3.750-3.750z" fill="#777" /><circle cx="17.500" cy="6.500" r="0.900" fill="#f1f1f1"/></svg>
<div class="a" style="left:572.5px;top:76px;line-height:13px;color:#111;letter-spacing:0.34px">EDIT</div>
<div class="a" style="left:619.5px;top:76px;line-height:13px;color:#111;letter-spacing:0.27px">ACTIONS</div>
<svg class="a" style="left:670.2px;top:79px" width="9.5" height="5.3" viewBox="0 0 9.5 5.3"><path d="M0 0h9.5L4.75 5.3z" fill="#777"/></svg>
<div class="a" style="left:701.2px;top:76px;line-height:13px;color:#111;letter-spacing:0.13px">REPORT</div>
<svg class="a" style="left:746.3px;top:79px" width="9.5" height="5.3" viewBox="0 0 9.5 5.3"><path d="M0 0h9.5L4.75 5.3z" fill="#777"/></svg>
<div class="a" style="left:276.3px;top:125px;line-height:13px;color:#777;letter-spacing:-0.15px">Showing 11 items.</div>
<div class="a" style="left:260px;top:147px;width:633px;height:1px;background:#d9d9d9;"></div>
<div class="a" style="left:260px;top:183px;width:633px;height:1px;background:#d9d9d9;"></div>
<div class="a" style="left:407px;top:148px;width:1px;height:404px;background:#d9d9d9;"></div>
<div class="a" style="left:476px;top:148px;width:1px;height:404px;background:#d9d9d9;"></div>
<div class="a" style="left:545px;top:148px;width:1px;height:404px;background:#d9d9d9;"></div>
<div class="a" style="left:614px;top:148px;width:1px;height:404px;background:#d9d9d9;"></div>
<div class="a" style="left:683px;top:148px;width:1px;height:404px;background:#d9d9d9;"></div>
<div class="a" style="left:752px;top:148px;width:1px;height:404px;background:#d9d9d9;"></div>
<div class="a" style="left:834px;top:148px;width:1px;height:404px;background:#d9d9d9;"></div>
<div class="a" style="left:276px;top:156px;width:20px;height:20px;background:#f6f6f6;border-radius:50%;border:1px solid #cfcfcf"></div>
<div class="a" style="left:312.2px;top:154px;line-height:13px;color:#888;letter-spacing:-0.25px">Assessment</div><div class="a" style="left:312.2px;top:167px;line-height:13px;color:#888;letter-spacing:-0.24px">Date</div>
<div class="a" style="left:416.2px;top:154px;line-height:13px;color:#888;letter-spacing:-0.13px">Assessm...</div><div class="a" style="left:416.2px;top:167px;line-height:13px;color:#888;letter-spacing:0.3px">Type</div>
<div class="a" style="right:1382px;top:154px;line-height:13px;color:#888;letter-spacing:0.15px">ADL Total</div>
<div class="a" style="right:1313px;top:154px;line-height:13px;color:#888;letter-spacing:0.26px">IADL Total</div>
<div class="a" style="right:1244px;top:154px;line-height:13px;color:#888;letter-spacing:-0.18px">Cognition</div><div class="a" style="right:1244px;top:167px;line-height:13px;color:#888;letter-spacing:0.29px">Total</div>
<div class="a" style="right:1175px;top:154px;line-height:13px;color:#888;letter-spacing:-0.11px">Mood</div><div class="a" style="right:1175px;top:167px;line-height:13px;color:#888;letter-spacing:0.29px">Total</div>
<div class="a" style="left:761.3px;top:154px;line-height:13px;color:#888;letter-spacing:-0.22px">Continence</div><div class="a" style="left:761.3px;top:167px;line-height:13px;color:#888;letter-spacing:-0.21px">Status</div>
<div class="a" style="left:843px;top:154px;line-height:13px;color:#888;letter-spacing:-0.15px">Risk Level</div>
<div class="a" style="left:260px;top:184px;width:633px;height:36px;background:#ebebeb;"></div>
<div class="a" style="left:407px;top:184px;width:1px;height:36px;background:#d4d4d4;"></div>
<div class="a" style="left:476px;top:184px;width:1px;height:36px;background:#d4d4d4;"></div>
<div class="a" style="left:545px;top:184px;width:1px;height:36px;background:#d4d4d4;"></div>
<div class="a" style="left:614px;top:184px;width:1px;height:36px;background:#d4d4d4;"></div>
<div class="a" style="left:683px;top:184px;width:1px;height:36px;background:#d4d4d4;"></div>
<div class="a" style="left:752px;top:184px;width:1px;height:36px;background:#d4d4d4;"></div>
<div class="a" style="left:834px;top:184px;width:1px;height:36px;background:#d4d4d4;"></div>
<div class="a" style="left:260px;top:184px;width:4px;height:36px;background:#003452;"></div>
<svg class="a" style="left:381.3px;top:199px" width="18" height="6.2" viewBox="0 0 18 6.2"><circle cx="3.1" cy="3.1" r="2.1" fill="#000"/><circle cx="9" cy="3.1" r="2.1" fill="#000"/><circle cx="14.9" cy="3.1" r="2.1" fill="#000"/></svg>
<div class="a" style="left:260px;top:220px;width:633px;height:1px;background:#d9d9d9;"></div>
<div class="a" style="left:312.3px;top:196px;line-height:13px;color:#000;letter-spacing:-0.07px">11-08-2025</div>
<div class="a" style="left:416.2px;top:190px;line-height:13px;color:#000;letter-spacing:0.19px">Re-</div>
<div class="a" style="left:416.2px;top:203px;line-height:13px;color:#000;letter-spacing:-0.13px">Assessm...</div>
<div class="a" style="right:1382px;top:196px;line-height:13px;color:#000;letter-spacing:-0.29px">100</div>
<div class="a" style="right:1313px;top:196px;line-height:13px;color:#000;letter-spacing:-0.29px">0</div>
<div class="a" style="right:1244px;top:196px;line-height:13px;color:#000;letter-spacing:-0.29px">6</div>
<div class="a" style="right:1175px;top:196px;line-height:13px;color:#000;letter-spacing:-0.29px">21</div>
<div class="a" style="left:843px;top:196px;line-height:13px;color:#000;letter-spacing:-0.15px">High</div>
<div class="a" style="left:260px;top:221px;width:633px;height:23px;background:#fff;"></div>
<div class="a" style="left:407px;top:221px;width:1px;height:23px;background:#d9d9d9;"></div>
<div class="a" style="left:476px;top:221px;width:1px;height:23px;background:#d9d9d9;"></div>
<div class="a" style="left:545px;top:221px;width:1px;height:23px;background:#d9d9d9;"></div>
<div class="a" style="left:614px;top:221px;width:1px;height:23px;background:#d9d9d9;"></div>
<div class="a" style="left:683px;top:221px;width:1px;height:23px;background:#d9d9d9;"></div>
<div class="a" style="left:752px;top:221px;width:1px;height:23px;background:#d9d9d9;"></div>
<div class="a" style="left:834px;top:221px;width:1px;height:23px;background:#d9d9d9;"></div>
<div class="a" style="left:260px;top:244px;width:633px;height:1px;background:#d9d9d9;"></div>
<div class="a" style="left:312.3px;top:227px;line-height:13px;color:#222;letter-spacing:-0.07px">13-08-2025</div>
<div class="a" style="left:416.2px;top:227px;line-height:13px;color:#222;letter-spacing:-0.02px">Initial</div>
<div class="a" style="right:1382px;top:227px;line-height:13px;color:#222;letter-spacing:-0.29px">1</div>
<div class="a" style="right:1313px;top:227px;line-height:13px;color:#222;letter-spacing:-0.29px">1</div>
<div class="a" style="right:1244px;top:227px;line-height:13px;color:#222;letter-spacing:-0.29px">1</div>
<div class="a" style="right:1175px;top:227px;line-height:13px;color:#222;letter-spacing:-0.29px">1</div>
<div class="a" style="left:761.3px;top:227px;line-height:13px;color:#222;letter-spacing:-0.19px">Continent</div>
<div class="a" style="left:843px;top:227px;line-height:13px;color:#222;letter-spacing:-0.05px">Very High</div>
<div class="a" style="left:260px;top:245px;width:633px;height:23px;background:#fff;"></div>
<div class="a" style="left:407px;top:245px;width:1px;height:23px;background:#d9d9d9;"></div>
<div class="a" style="left:476px;top:245px;width:1px;height:23px;background:#d9d9d9;"></div>
<div class="a" style="left:545px;top:245px;width:1px;height:23px;background:#d9d9d9;"></div>
<div class="a" style="left:614px;top:245px;width:1px;height:23px;background:#d9d9d9;"></div>
<div class="a" style="left:683px;top:245px;width:1px;height:23px;background:#d9d9d9;"></div>
<div class="a" style="left:752px;top:245px;width:1px;height:23px;background:#d9d9d9;"></div>
<div class="a" style="left:834px;top:245px;width:1px;height:23px;background:#d9d9d9;"></div>
<div class="a" style="left:260px;top:268px;width:633px;height:1px;background:#d9d9d9;"></div>
<div class="a" style="left:312.3px;top:251px;line-height:13px;color:#222;letter-spacing:-0.07px">13-08-2025</div>
<div class="a" style="left:416.2px;top:251px;line-height:13px;color:#222;letter-spacing:-0.02px">Initial</div>
<div class="a" style="left:761.3px;top:251px;line-height:13px;color:#222;letter-spacing:-0.19px">Continent</div>
<div class="a" style="left:843px;top:251px;line-height:13px;color:#222;letter-spacing:-0.05px">Very High</div>
<div class="a" style="left:260px;top:269px;width:633px;height:36px;background:#fff;"></div>
<div class="a" style="left:407px;top:269px;width:1px;height:36px;background:#d9d9d9;"></div>
<div class="a" style="left:476px;top:269px;width:1px;height:36px;background:#d9d9d9;"></div>
<div class="a" style="left:545px;top:269px;width:1px;height:36px;background:#d9d9d9;"></div>
<div class="a" style="left:614px;top:269px;width:1px;height:36px;background:#d9d9d9;"></div>
<div class="a" style="left:683px;top:269px;width:1px;height:36px;background:#d9d9d9;"></div>
<div class="a" style="left:752px;top:269px;width:1px;height:36px;background:#d9d9d9;"></div>
<div class="a" style="left:834px;top:269px;width:1px;height:36px;background:#d9d9d9;"></div>
<div class="a" style="left:260px;top:305px;width:633px;height:1px;background:#d9d9d9;"></div>
<div class="a" style="left:312.3px;top:281px;line-height:13px;color:#222;letter-spacing:-0.07px">14-08-2025</div>
<div class="a" style="left:416.2px;top:275px;line-height:13px;color:#222;letter-spacing:0.19px">Re-</div>
<div class="a" style="left:416.2px;top:288px;line-height:13px;color:#222;letter-spacing:-0.13px">Assessm...</div>
<div class="a" style="left:761.3px;top:281px;line-height:13px;color:#222;letter-spacing:-0.19px">Continent</div>
<div class="a" style="left:843px;top:281px;line-height:13px;color:#222;letter-spacing:-0.05px">Very High</div>
<div class="a" style="left:260px;top:306px;width:633px;height:49px;background:#fff;"></div>
<div class="a" style="left:407px;top:306px;width:1px;height:49px;background:#d9d9d9;"></div>
<div class="a" style="left:476px;top:306px;width:1px;height:49px;background:#d9d9d9;"></div>
<div class="a" style="left:545px;top:306px;width:1px;height:49px;background:#d9d9d9;"></div>
<div class="a" style="left:614px;top:306px;width:1px;height:49px;background:#d9d9d9;"></div>
<div class="a" style="left:683px;top:306px;width:1px;height:49px;background:#d9d9d9;"></div>
<div class="a" style="left:752px;top:306px;width:1px;height:49px;background:#d9d9d9;"></div>
<div class="a" style="left:834px;top:306px;width:1px;height:49px;background:#d9d9d9;"></div>
<div class="a" style="left:260px;top:355px;width:633px;height:1px;background:#d9d9d9;"></div>
<div class="a" style="left:312.3px;top:325px;line-height:13px;color:#222;letter-spacing:-0.07px">10-08-2025</div>
<div class="a" style="left:416.2px;top:325px;line-height:13px;color:#222;letter-spacing:-0.02px">Initial</div>
<div class="a" style="right:1382px;top:325px;line-height:13px;color:#222;letter-spacing:-0.29px">10</div>
<div class="a" style="right:1313px;top:325px;line-height:13px;color:#222;letter-spacing:-0.29px">6</div>
<div class="a" style="right:1244px;top:325px;line-height:13px;color:#222;letter-spacing:-0.29px">12</div>
<div class="a" style="right:1175px;top:325px;line-height:13px;color:#222;letter-spacing:-0.29px">8</div>
<div class="a" style="left:761.3px;top:325px;line-height:13px;color:#222;letter-spacing:-0.19px">Continent</div>
<div class="a" style="left:843px;top:325px;line-height:13px;color:#222;letter-spacing:-0.05px">Very High</div>
<div class="a" style="left:260px;top:356px;width:633px;height:49px;background:#fff;"></div>
<div class="a" style="left:407px;top:356px;width:1px;height:49px;background:#d9d9d9;"></div>
<div class="a" style="left:476px;top:356px;width:1px;height:49px;background:#d9d9d9;"></div>
<div class="a" style="left:545px;top:356px;width:1px;height:49px;background:#d9d9d9;"></div>
<div class="a" style="left:614px;top:356px;width:1px;height:49px;background:#d9d9d9;"></div>
<div class="a" style="left:683px;top:356px;width:1px;height:49px;background:#d9d9d9;"></div>
<div class="a" style="left:752px;top:356px;width:1px;height:49px;background:#d9d9d9;"></div>
<div class="a" style="left:834px;top:356px;width:1px;height:49px;background:#d9d9d9;"></div>
<div class="a" style="left:260px;top:405px;width:633px;height:1px;background:#d9d9d9;"></div>
<div class="a" style="left:312.3px;top:375px;line-height:13px;color:#222;letter-spacing:-0.07px">13-08-2025</div>
<div class="a" style="left:416.2px;top:368px;line-height:13px;color:#222;letter-spacing:0.19px">Re-</div>
<div class="a" style="left:416.2px;top:381px;line-height:13px;color:#222;letter-spacing:-0.13px">Assessm...</div>
<div class="a" style="right:1382px;top:375px;line-height:13px;color:#222;letter-spacing:-0.29px">4</div>
<div class="a" style="right:1313px;top:375px;line-height:13px;color:#222;letter-spacing:-0.29px">2</div>
<div class="a" style="right:1244px;top:375px;line-height:13px;color:#222;letter-spacing:-0.29px">5</div>
<div class="a" style="right:1175px;top:375px;line-height:13px;color:#222;letter-spacing:-0.29px">3</div>
<div class="a" style="left:761.3px;top:375px;line-height:13px;color:#222;letter-spacing:-0.19px">Continent</div>
<div class="a" style="left:843px;top:375px;line-height:13px;color:#222;letter-spacing:-0.19px">Moderate</div>
<div class="a" style="left:260px;top:406px;width:633px;height:23px;background:#fff;"></div>
<div class="a" style="left:407px;top:406px;width:1px;height:23px;background:#d9d9d9;"></div>
<div class="a" style="left:476px;top:406px;width:1px;height:23px;background:#d9d9d9;"></div>
<div class="a" style="left:545px;top:406px;width:1px;height:23px;background:#d9d9d9;"></div>
<div class="a" style="left:614px;top:406px;width:1px;height:23px;background:#d9d9d9;"></div>
<div class="a" style="left:683px;top:406px;width:1px;height:23px;background:#d9d9d9;"></div>
<div class="a" style="left:752px;top:406px;width:1px;height:23px;background:#d9d9d9;"></div>
<div class="a" style="left:834px;top:406px;width:1px;height:23px;background:#d9d9d9;"></div>
<div class="a" style="left:260px;top:429px;width:633px;height:1px;background:#d9d9d9;"></div>
<div class="a" style="left:312.3px;top:412px;line-height:13px;color:#222;letter-spacing:-0.07px">19-08-2025</div>
<div class="a" style="left:416.2px;top:412px;line-height:13px;color:#222;letter-spacing:-0.02px">Initial</div>
<div class="a" style="left:761.3px;top:412px;line-height:13px;color:#222;letter-spacing:-0.19px">Continent</div>
<div class="a" style="left:843px;top:412px;line-height:13px;color:#222;letter-spacing:-0.05px">Very High</div>
<div class="a" style="left:260px;top:430px;width:633px;height:23px;background:#fff;"></div>
<div class="a" style="left:407px;top:430px;width:1px;height:23px;background:#d9d9d9;"></div>
<div class="a" style="left:476px;top:430px;width:1px;height:23px;background:#d9d9d9;"></div>
<div class="a" style="left:545px;top:430px;width:1px;height:23px;background:#d9d9d9;"></div>
<div class="a" style="left:614px;top:430px;width:1px;height:23px;background:#d9d9d9;"></div>
<div class="a" style="left:683px;top:430px;width:1px;height:23px;background:#d9d9d9;"></div>
<div class="a" style="left:752px;top:430px;width:1px;height:23px;background:#d9d9d9;"></div>
<div class="a" style="left:834px;top:430px;width:1px;height:23px;background:#d9d9d9;"></div>
<div class="a" style="left:260px;top:453px;width:633px;height:1px;background:#d9d9d9;"></div>
<div class="a" style="left:312.3px;top:436px;line-height:13px;color:#222;letter-spacing:-0.07px">21-08-2025</div>
<div class="a" style="left:416.2px;top:436px;line-height:13px;color:#222;letter-spacing:-0.02px">Initial</div>
<div class="a" style="right:1382px;top:436px;line-height:13px;color:#222;letter-spacing:-0.29px">5</div>
<div class="a" style="right:1313px;top:436px;line-height:13px;color:#222;letter-spacing:-0.29px">1</div>
<div class="a" style="right:1244px;top:436px;line-height:13px;color:#222;letter-spacing:-0.29px">2</div>
<div class="a" style="right:1175px;top:436px;line-height:13px;color:#222;letter-spacing:-0.29px">1</div>
<div class="a" style="left:761.3px;top:436px;line-height:13px;color:#222;letter-spacing:-0.19px">Continent</div>
<div class="a" style="left:843px;top:436px;line-height:13px;color:#222;letter-spacing:0.05px">Low</div>
<div class="a" style="left:260px;top:454px;width:633px;height:36px;background:#fff;"></div>
<div class="a" style="left:407px;top:454px;width:1px;height:36px;background:#d9d9d9;"></div>
<div class="a" style="left:476px;top:454px;width:1px;height:36px;background:#d9d9d9;"></div>
<div class="a" style="left:545px;top:454px;width:1px;height:36px;background:#d9d9d9;"></div>
<div class="a" style="left:614px;top:454px;width:1px;height:36px;background:#d9d9d9;"></div>
<div class="a" style="left:683px;top:454px;width:1px;height:36px;background:#d9d9d9;"></div>
<div class="a" style="left:752px;top:454px;width:1px;height:36px;background:#d9d9d9;"></div>
<div class="a" style="left:834px;top:454px;width:1px;height:36px;background:#d9d9d9;"></div>
<div class="a" style="left:260px;top:490px;width:633px;height:1px;background:#d9d9d9;"></div>
<div class="a" style="left:312.3px;top:466px;line-height:13px;color:#222;letter-spacing:-0.07px">13-09-2025</div>
<div class="a" style="left:416.2px;top:460px;line-height:13px;color:#222;letter-spacing:0.19px">Re-</div>
<div class="a" style="left:416.2px;top:473px;line-height:13px;color:#222;letter-spacing:-0.13px">Assessm...</div>
<div class="a" style="right:1382px;top:466px;line-height:13px;color:#222;letter-spacing:-0.29px">5</div>
<div class="a" style="right:1313px;top:466px;line-height:13px;color:#222;letter-spacing:-0.29px">0</div>
<div class="a" style="right:1244px;top:466px;line-height:13px;color:#222;letter-spacing:-0.29px">0</div>
<div class="a" style="right:1175px;top:466px;line-height:13px;color:#222;letter-spacing:-0.29px">0</div>
<div class="a" style="left:843px;top:466px;line-height:13px;color:#222;letter-spacing:0.05px">Low</div>
<div class="a" style="left:260px;top:491px;width:633px;height:23px;background:#fff;"></div>
<div class="a" style="left:407px;top:491px;width:1px;height:23px;background:#d9d9d9;"></div>
<div class="a" style="left:476px;top:491px;width:1px;height:23px;background:#d9d9d9;"></div>
<div class="a" style="left:545px;top:491px;width:1px;height:23px;background:#d9d9d9;"></div>
<div class="a" style="left:614px;top:491px;width:1px;height:23px;background:#d9d9d9;"></div>
<div class="a" style="left:683px;top:491px;width:1px;height:23px;background:#d9d9d9;"></div>
<div class="a" style="left:752px;top:491px;width:1px;height:23px;background:#d9d9d9;"></div>
<div class="a" style="left:834px;top:491px;width:1px;height:23px;background:#d9d9d9;"></div>
<div class="a" style="left:260px;top:514px;width:633px;height:1px;background:#d9d9d9;"></div>
<div class="a" style="left:312.3px;top:497px;line-height:13px;color:#222;letter-spacing:-0.07px">04-11-2025</div>
<div class="a" style="left:416.2px;top:497px;line-height:13px;color:#222;letter-spacing:-0.02px">Initial</div>
<div class="a" style="right:1382px;top:497px;line-height:13px;color:#222;letter-spacing:-0.29px">5</div>
<div class="a" style="right:1313px;top:497px;line-height:13px;color:#222;letter-spacing:-0.29px">0</div>
<div class="a" style="right:1244px;top:497px;line-height:13px;color:#222;letter-spacing:-0.29px">0</div>
<div class="a" style="right:1175px;top:497px;line-height:13px;color:#222;letter-spacing:-0.29px">0</div>
<div class="a" style="left:843px;top:497px;line-height:13px;color:#222;letter-spacing:0.05px">Low</div>
<div class="a" style="left:260px;top:515px;width:633px;height:36px;background:#fff;"></div>
<div class="a" style="left:407px;top:515px;width:1px;height:36px;background:#d9d9d9;"></div>
<div class="a" style="left:476px;top:515px;width:1px;height:36px;background:#d9d9d9;"></div>
<div class="a" style="left:545px;top:515px;width:1px;height:36px;background:#d9d9d9;"></div>
<div class="a" style="left:614px;top:515px;width:1px;height:36px;background:#d9d9d9;"></div>
<div class="a" style="left:683px;top:515px;width:1px;height:36px;background:#d9d9d9;"></div>
<div class="a" style="left:752px;top:515px;width:1px;height:36px;background:#d9d9d9;"></div>
<div class="a" style="left:834px;top:515px;width:1px;height:36px;background:#d9d9d9;"></div>
<div class="a" style="left:260px;top:551px;width:633px;height:1px;background:#d9d9d9;"></div>
<div class="a" style="left:312.3px;top:527px;line-height:13px;color:#222;letter-spacing:-0.07px">08-12-2025</div>
<div class="a" style="left:416.2px;top:521px;line-height:13px;color:#222;letter-spacing:0.19px">Re-</div>
<div class="a" style="left:416.2px;top:534px;line-height:13px;color:#222;letter-spacing:-0.13px">Assessm...</div>
<div class="a" style="right:1382px;top:527px;line-height:13px;color:#222;letter-spacing:-0.29px">5</div>
<div class="a" style="right:1313px;top:527px;line-height:13px;color:#222;letter-spacing:-0.29px">0</div>
<div class="a" style="right:1244px;top:527px;line-height:13px;color:#222;letter-spacing:-0.29px">0</div>
<div class="a" style="right:1175px;top:527px;line-height:13px;color:#222;letter-spacing:-0.29px">0</div>
<div class="a" style="left:843px;top:527px;line-height:13px;color:#222;letter-spacing:0.05px">Low</div>
<div class="a" style="left:260px;top:552px;width:633px;height:528px;background:#fff;"></div>
<div class="a" style="left:260px;top:1073px;width:633px;height:7px;background:#ebebeb;"></div>
<div class="a" style="left:260px;top:1073px;width:437px;height:7px;background:#adadad;background:linear-gradient(#b9b9b9,#a9a9a9 40%,#a9a9a9)"></div>
</div></div>
<div class="a" style="left:894px;top:0px;width:1026px;height:1080px;background:#fff;"></div>
<div class="a" style="left:894px;top:0px;width:1026px;height:57px;background:#0072c6;"></div>
<svg class="a" style="left:915px;top:21px" width="14.500" height="14.500" viewBox="0 0 14 14"><path d="M0.800 0.800L13.200 13.200M13.200 0.800L0.800 13.200" stroke="#fff" stroke-width="2.400" fill="none"/></svg>
<svg class="a" style="left:1636px;top:16px;" width="24" height="24" viewBox="0 0 24 24"><path d="M3 17.250V21h3.750L19.600 8.150a2.650 2.650 0 0 0-3.750-3.750z" fill="#fff" /><circle cx="17.500" cy="6.500" r="0.900" fill="#0072c6"/></svg>
<div class="a" style="left:1664.7px;top:22px;line-height:14px;font-size:12px;color:#fff;letter-spacing:0.32px">EDIT</div>
<div class="a" style="right:138px;top:22px;line-height:14px;font-size:12px;color:#fff;letter-spacing:-0.48px">DELETE</div>
<div class="a" style="left:1716px;top:5px;width:49px;height:45px;background:#f7fbfc;border-radius:14px;box-shadow:0 12px 24px rgba(0,0,0,.075)"></div>
<svg class="a" style="left:1733px;top:21px" width="15" height="15" viewBox="0 0 15 15"><path d="M3.500 10.500V6.500a4 4 0 0 1 8 0v4M2 10.800h11M6.200 12.800a1.400 1.400 0 0 0 2.600 0" fill="none" stroke="#5a5fc4" stroke-width="1.200"/><path d="M7.500 1v1.500" stroke="#5a5fc4" stroke-width="1.200"/></svg>
<div class="a" style="left:1734px;top:-1px;width:36px;height:24px;background:#d2763d;border-radius:12px"></div>
<div class="a" style="left:1750px;top:0px;width:20px;height:22px;background:#e04a2a;border-radius:0 11px 11px 8px;opacity:.55"></div>
<div class="a" style="left:1737px;width:30px;text-align:center;top:7px;line-height:12px;font-size:10px;color:#fff;font-weight:700;-webkit-text-stroke:0">26</div>
<svg class="a" style="left:1806px;top:17px" width="20" height="20" viewBox="0 0 20 20"><path d="M8.600 3.700L3.600 8.700L8.600 13.700M3.600 8.700H13.300a4.200 4.200 0 0 1 0 8.400H5.500" fill="none" stroke="#fff" stroke-width="2.400"/></svg>
<div class="a" style="left:1832.5px;top:22px;line-height:14px;font-size:12px;color:#fff;letter-spacing:-0.12px">CLOSE</div>
<svg class="a" style="left:1886px;top:24.8px" width="18.4" height="6.4" viewBox="0 0 18.4 6.4"><circle cx="3.2" cy="3.2" r="2.2" fill="#fff"/><circle cx="9.2" cy="3.2" r="2.2" fill="#fff"/><circle cx="15.2" cy="3.2" r="2.2" fill="#fff"/></svg>
<div class="a" style="left:910px;top:68px;line-height:16px;font-size:12px;color:#222;letter-spacing:-0.23px">Assessment Date</div><div class="a" style="left:910px;top:89px;line-height:13px;color:#7a7a7a;letter-spacing:-0.05px">11-08-2025</div>
<div class="a" style="left:894px;top:109px;width:1026px;height:1px;background:#d9d9d9;"></div>
<div class="a" style="left:910px;top:121px;line-height:16px;font-size:12px;color:#222;letter-spacing:-0.15px">Assessment Type</div><div class="a" style="left:910px;top:142px;line-height:13px;color:#7a7a7a;letter-spacing:-0.01px">Re-Assessment</div>
<svg class="a" style="left:986.6px;top:137.2px" width="20" height="20" viewBox="-10 -10 20 20"><path d="M-2.8 -5.3L2.8 0L-2.8 5.3" fill="none" stroke="#8a8686" stroke-width="2.2"/></svg>
<div class="a" style="left:894px;top:162px;width:1026px;height:1px;background:#d9d9d9;"></div>
<div class="a" style="left:910px;top:174px;line-height:16px;font-size:12px;color:#222;letter-spacing:-0.17px">Risk Level</div><div class="a" style="left:910px;top:195px;line-height:13px;color:#7a7a7a;letter-spacing:-0.15px">High</div>
<svg class="a" style="left:933.6px;top:190.2px" width="20" height="20" viewBox="-10 -10 20 20"><path d="M-2.8 -5.3L2.8 0L-2.8 5.3" fill="none" stroke="#8a8686" stroke-width="2.2"/></svg>
<div class="a" style="left:894px;top:215px;width:1026px;height:1px;background:#d9d9d9;"></div>
<div class="a" style="left:894px;top:227px;width:1026px;height:36px;background:#f1f1f1;border-top:1px solid #d9d9d9;border-bottom:1px solid #d9d9d9"></div>
<div class="a" style="left:910px;top:238px;line-height:16px;font-size:12px;color:#222;letter-spacing:-0.02px">FUNCTIONAL ASSESSMENT</div>
<svg class="a" style="left:1885px;top:234.8px" width="20" height="20" viewBox="-10 -10 20 20"><path d="M-5.2 2.5L0 -2.5L5.2 2.5" fill="none" stroke="#9a9a9a" stroke-width="2.2"/></svg>
<div class="a" style="left:904px;top:267px;width:155px;height:23px;background:#008000;"></div><div class="a" style="right:882.5px;top:270px;line-height:18px;font-size:14px;color:#000;font-weight:700;-webkit-text-stroke:0">ADL Total</div>
<div class="a" style="left:1062px;top:267px;width:141px;height:23px;background:#008000;"></div><div class="a" style="left:1070px;top:270px;line-height:18px;font-size:14px;color:#000;font-weight:700;-webkit-text-stroke:0">100</div>
<div class="a" style="left:1207px;top:267px;width:155px;height:23px;background:#ff0000;"></div><div class="a" style="right:579.5px;top:270px;line-height:18px;font-size:14px;color:#000;font-weight:700;-webkit-text-stroke:0">Cognition Total</div>
<div class="a" style="left:1365px;top:267px;width:141px;height:23px;background:#ff0000;"></div><div class="a" style="left:1373px;top:270px;line-height:18px;font-size:14px;color:#000;font-weight:700;-webkit-text-stroke:0">6</div>
<div class="a" style="left:894px;top:294px;width:1026px;height:1px;background:#d9d9d9;"></div>
<div class="a" style="left:904px;top:299px;width:155px;height:23px;background:#ffd700;"></div><div class="a" style="right:882.5px;top:302px;line-height:18px;font-size:14px;color:#000;font-weight:700;-webkit-text-stroke:0">IADL Total</div>
<div class="a" style="left:1062px;top:299px;width:141px;height:23px;background:#ffd700;"></div><div class="a" style="left:1070px;top:302px;line-height:18px;font-size:14px;color:#000;font-weight:700;-webkit-text-stroke:0">0</div>
<div class="a" style="left:1207px;top:299px;width:155px;height:23px;background:#800080;"></div><div class="a" style="right:579.5px;top:302px;line-height:18px;font-size:14px;color:#000;font-weight:700;-webkit-text-stroke:0">Mood Total</div>
<div class="a" style="left:1365px;top:299px;width:141px;height:23px;background:#800080;"></div><div class="a" style="left:1373px;top:302px;line-height:18px;font-size:14px;color:#000;font-weight:700;-webkit-text-stroke:0">21</div>
<div class="a" style="left:894px;top:327px;width:1026px;height:1px;background:#d9d9d9;"></div>
<div class="a" style="left:910px;top:339px;line-height:16px;font-size:12px;color:#222;letter-spacing:-0.2px">Continence Status</div>
<div class="a" style="left:894px;top:380px;width:1026px;height:1px;background:#d9d9d9;"></div>
<div class="a" style="left:910px;top:392px;line-height:16px;font-size:12px;color:#222;letter-spacing:-0.2px">Notes</div>
<div class="a" style="left:894px;top:433px;width:1026px;height:1px;background:#d9d9d9;"></div>
<div class="a" style="left:894px;top:446px;width:1026px;height:36px;background:#f1f1f1;border-top:1px solid #d9d9d9;border-bottom:1px solid #d9d9d9"></div>
<div class="a" style="left:910px;top:457px;line-height:16px;font-size:12px;color:#222;letter-spacing:0.25px">AUDITING INFORMATION</div>
<svg class="a" style="left:1885px;top:453.6px" width="20" height="20" viewBox="-10 -10 20 20"><path d="M-5.2 -2.5L0 2.5L5.2 -2.5" fill="none" stroke="#9a9a9a" stroke-width="2.2"/></svg>
<div class="a" style="left:1009px;top:487px;width:796px;height:23px;background:#fff;border:1px solid #0072c6;border-radius:3px"></div>
<div class="a" style="left:1009px;top:487px;width:203px;height:23px;background:#0072c6;border-radius:3px 0 0 3px"></div>
<div class="a" style="left:1484px;top:487px;width:1px;height:23px;background:#0072c6;"></div>
<div class="a" style="left:1644px;top:487px;width:1px;height:23px;background:#0072c6;"></div>
<div class="a" style="left:960.2px;width:300px;text-align:center;top:493px;line-height:13px;color:#fff;letter-spacing:0.03px">Activities of Daily Living (ADLs)</div>
<div class="a" style="left:1197.8px;width:300px;text-align:center;top:493px;line-height:13px;color:#0072c6;letter-spacing:0.07px">Instrumental Activities of Daily Living (IADLs)</div>
<div class="a" style="left:1414.5px;width:300px;text-align:center;top:493px;line-height:13px;color:#0072c6;letter-spacing:-0.04px">Cognitive Assessment</div>
<div class="a" style="left:1574.5px;width:300px;text-align:center;top:493px;line-height:13px;color:#0072c6;letter-spacing:0.04px">Mood Assessment</div>
<div class="a" style="left:894px;top:516px;width:1026px;height:1px;background:#d9d9d9;"></div>
<div class="a" style="left:910px;top:528px;width:994px;height:429px;background:#fff;border:1px solid #e0e0e0;box-shadow:1px 2px 4px rgba(0,0,0,.12)"></div>
<div class="a" style="left:926px;top:552px;line-height:13px;color:#222;letter-spacing:0.21px">ADL (8)</div>
<svg class="a" style="left:969.3px;top:555px" width="9.5" height="5.3" viewBox="0 0 9.5 5.3"><path d="M0 0h9.5L4.75 5.3z" fill="#777"/></svg>
<svg class="a" style="left:990.3px;top:553.9px" width="18.2" height="6.2" viewBox="0 0 18.2 6.2"><circle cx="3.1" cy="3.1" r="2.1" fill="#6a6a6a"/><circle cx="9.1" cy="3.1" r="2.1" fill="#6a6a6a"/><circle cx="15.1" cy="3.1" r="2.1" fill="#6a6a6a"/></svg>
<svg class="a" style="left:1019.5px;top:545px;" width="25" height="25" viewBox="0 0 24 24"><path d="M15.5 14h-.79l-.28-.27C15.41 12.59 16 11.11 16 9.5 16 5.91 13.09 3 9.5 3S3 5.91 3 9.5 5.91 16 9.5 16c1.61 0 3.09-.59 4.23-1.57l.27.28v.79l5 4.99L20.49 19l-4.99-5zm-6 0C7.01 14 5 11.99 5 9.5S7.01 5 9.5 5 14 7.01 14 9.5 11.99 14 9.5 14z" fill="#666" /></svg>
<div class="a" style="left:1066px;top:556px;width:15px;height:2px;background:#6a6a6a;"></div><div class="a" style="left:1072.5px;top:549.5px;width:2px;height:15px;background:#6a6a6a;"></div>
<div class="a" style="left:1089.6px;top:552px;line-height:13px;color:#222;letter-spacing:-0.05px">NEW</div>
<div class="a" style="left:1136.5px;top:552px;line-height:13px;color:#222;letter-spacing:0.27px">ACTIONS</div>
<svg class="a" style="left:1187px;top:555px" width="9.5" height="5.3" viewBox="0 0 9.5 5.3"><path d="M0 0h9.5L4.75 5.3z" fill="#777"/></svg>
<div class="a" style="left:1217.7px;top:552px;line-height:13px;color:#222;letter-spacing:0.13px">REPORT</div>
<svg class="a" style="left:1263px;top:555px" width="9.5" height="5.3" viewBox="0 0 9.5 5.3"><path d="M0 0h9.5L4.75 5.3z" fill="#777"/></svg>
<div class="a" style="left:1832px;top:551px;line-height:13px;color:#222;letter-spacing:-0.08px">See All</div>
<svg class="a" style="left:1863.5px;top:547px" width="20" height="20" viewBox="-10 -10 20 20"><path d="M-2.75 -5.3L2.75 0L-2.75 5.3" fill="none" stroke="#444" stroke-width="1.6"/></svg>
<div class="a" style="left:927px;top:580px;width:955px;height:357px;background:#fff;border:1px solid #d9d9d9;box-shadow:0 1px 2px rgba(0,0,0,.1)"></div>
<div class="a" style="left:928px;top:581px;width:953px;height:23px;background:#f1f1f1;"></div>
<div class="a" style="left:1079px;top:581px;width:1px;height:355px;background:#d9d9d9;"></div>
<div class="a" style="left:1312px;top:581px;width:1px;height:355px;background:#d9d9d9;"></div>
<div class="a" style="left:1390px;top:581px;width:1px;height:355px;background:#d9d9d9;"></div>
<div class="a" style="left:1535px;top:581px;width:1px;height:355px;background:#d9d9d9;"></div>
<div class="a" style="left:1868px;top:581px;width:1px;height:355px;background:#d9d9d9;"></div>
<div class="a" style="left:943.7px;top:587px;line-height:13px;color:#888;letter-spacing:0.02px">Scale Type</div>
<div class="a" style="left:1088px;top:587px;line-height:13px;color:#888;letter-spacing:-0.25px">Activity</div>
<div class="a" style="right:537px;top:587px;line-height:13px;color:#888;letter-spacing:-0.16px">Score</div>
<div class="a" style="left:1399px;top:587px;line-height:13px;color:#888;letter-spacing:-0.25px">Assistance</div>
<div class="a" style="left:1544px;top:587px;line-height:13px;color:#888;letter-spacing:-0.18px">Notes</div>
<div class="a" style="left:928px;top:604px;width:953px;height:1px;background:#d9d9d9;"></div>
<div class="a" style="left:943.7px;top:611px;line-height:13px;color:#222;letter-spacing:0.17px">Barthel Index (0–</div>
<div class="a" style="left:943.7px;top:624px;line-height:13px;color:#222;letter-spacing:-0.13px">100)</div>
<div class="a" style="left:1088px;top:618px;line-height:13px;color:#222;letter-spacing:-0.22px">Bathing</div>
<div class="a" style="right:537px;top:618px;line-height:13px;color:#222;letter-spacing:-0.29px">5</div>
<div class="a" style="left:928px;top:641px;width:953px;height:1px;background:#d9d9d9;"></div>
<div class="a" style="left:943.7px;top:648px;line-height:13px;color:#222;letter-spacing:0.17px">Barthel Index (0–</div>
<div class="a" style="left:943.7px;top:661px;line-height:13px;color:#222;letter-spacing:-0.13px">100)</div>
<div class="a" style="left:1088px;top:655px;line-height:13px;color:#222;letter-spacing:-0.18px">Dressing</div>
<div class="a" style="right:537px;top:655px;line-height:13px;color:#222;letter-spacing:-0.29px">5</div>
<div class="a" style="left:928px;top:678px;width:953px;height:1px;background:#d9d9d9;"></div>
<div class="a" style="left:943.7px;top:685px;line-height:13px;color:#222;letter-spacing:0.17px">Barthel Index (0–</div>
<div class="a" style="left:943.7px;top:698px;line-height:13px;color:#222;letter-spacing:-0.13px">100)</div>
<div class="a" style="left:1088px;top:692px;line-height:13px;color:#222;letter-spacing:0.07px">Toileting</div>
<div class="a" style="right:537px;top:692px;line-height:13px;color:#222;letter-spacing:-0.29px">15</div>
<div class="a" style="left:928px;top:715px;width:953px;height:1px;background:#d9d9d9;"></div>
<div class="a" style="left:943.7px;top:722px;line-height:13px;color:#222;letter-spacing:0.17px">Barthel Index (0–</div>
<div class="a" style="left:943.7px;top:735px;line-height:13px;color:#222;letter-spacing:-0.13px">100)</div>
<div class="a" style="left:1088px;top:729px;line-height:13px;color:#222;letter-spacing:-0.18px">Dressing</div>
<div class="a" style="right:537px;top:729px;line-height:13px;color:#222;letter-spacing:-0.29px">15</div>
<div class="a" style="left:928px;top:752px;width:953px;height:1px;background:#d9d9d9;"></div>
<div class="a" style="left:943.7px;top:759px;line-height:13px;color:#222;letter-spacing:0.17px">Barthel Index (0–</div>
<div class="a" style="left:943.7px;top:772px;line-height:13px;color:#222;letter-spacing:-0.13px">100)</div>
<div class="a" style="left:1088px;top:766px;line-height:13px;color:#222;letter-spacing:-0.18px">Dressing</div>
<div class="a" style="right:537px;top:766px;line-height:13px;color:#222;letter-spacing:-0.29px">15</div>
<div class="a" style="left:928px;top:789px;width:953px;height:1px;background:#d9d9d9;"></div>
<div class="a" style="left:943.7px;top:796px;line-height:13px;color:#222;letter-spacing:0.17px">Barthel Index (0–</div>
<div class="a" style="left:943.7px;top:809px;line-height:13px;color:#222;letter-spacing:-0.13px">100)</div>
<div class="a" style="left:1088px;top:803px;line-height:13px;color:#222;letter-spacing:-0.2px">Mobility</div>
<div class="a" style="right:537px;top:803px;line-height:13px;color:#222;letter-spacing:-0.29px">15</div>
<div class="a" style="left:928px;top:826px;width:953px;height:1px;background:#d9d9d9;"></div>
<div class="a" style="left:943.7px;top:833px;line-height:13px;color:#222;letter-spacing:0.17px">Barthel Index (0–</div>
<div class="a" style="left:943.7px;top:846px;line-height:13px;color:#222;letter-spacing:-0.13px">100)</div>
<div class="a" style="left:1088px;top:840px;line-height:13px;color:#222;letter-spacing:-0.19px">Eating</div>
<div class="a" style="right:537px;top:840px;line-height:13px;color:#222;letter-spacing:-0.29px">15</div>
<div class="a" style="left:928px;top:863px;width:953px;height:1px;background:#d9d9d9;"></div>
<div class="a" style="left:943.7px;top:870px;line-height:13px;color:#222;letter-spacing:0.17px">Barthel Index (0–</div>
<div class="a" style="left:943.7px;top:883px;line-height:13px;color:#222;letter-spacing:-0.13px">100)</div>
<div class="a" style="left:1088px;top:877px;line-height:13px;color:#222;letter-spacing:-0.19px">Eating</div>
<div class="a" style="right:537px;top:877px;line-height:13px;color:#222;letter-spacing:-0.29px">15</div>
<div class="a" style="left:928px;top:900px;width:953px;height:1px;background:#d9d9d9;"></div>
<div class="a" style="right:537px;top:907px;line-height:12px;font-size:10px;color:#888;letter-spacing:0.3px">Total:</div>
<div class="a" style="right:537px;top:919px;line-height:13px;color:#222;letter-spacing:-0.29px">100</div>
</body></html>
